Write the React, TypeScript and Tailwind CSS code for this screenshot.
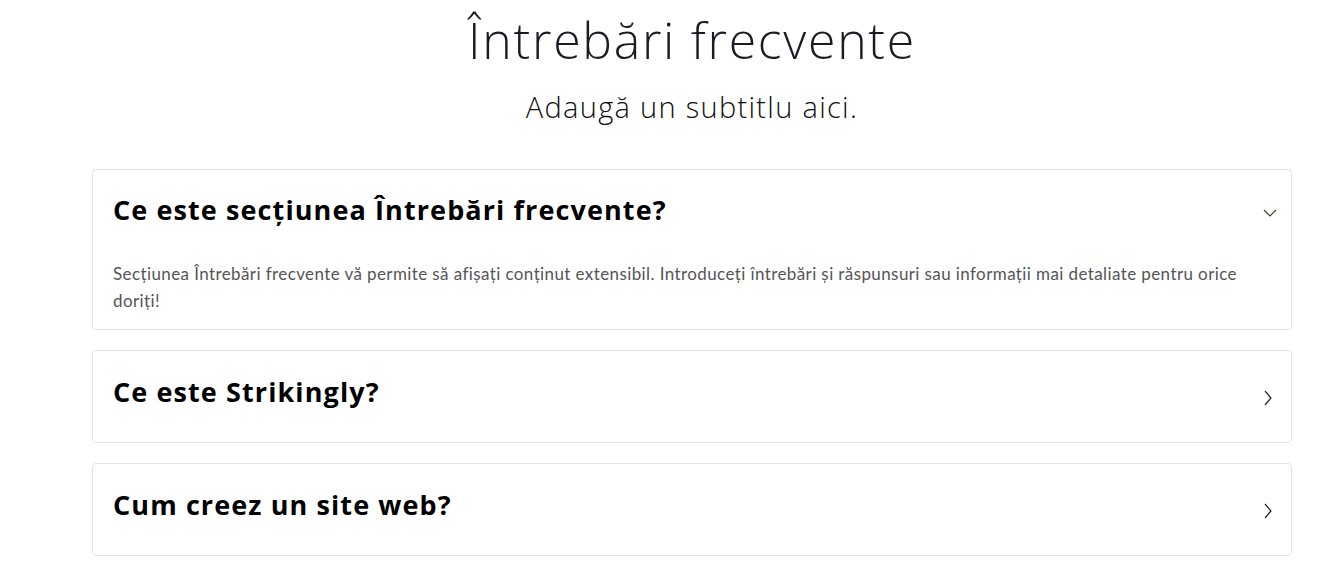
const faqs = [
  {
    q: 'Ce este secțiunea Întrebări frecvente?',
    a: 'Secțiunea Întrebări frecvente vă permite să afișați conținut extensibil. Introduceți întrebări și răspunsuri sau informații mai detaliate pentru orice doriți!',
    open: true,
  },
  { q: 'Ce este Strikingly?', a: '', open: false },
  { q: 'Cum creez un site web?', a: '', open: false },
];

function Chevron({ open }: { open: boolean }) {
  if (open) {
    return (
      <svg width="14" height="8" viewBox="0 0 14 8" className="mr-[14px] -mt-[4px]">
        <polyline points="1,1 7,7 13,1" fill="none" stroke="#4a3c2a" strokeWidth="1.2" />
      </svg>
    );
  }
  return (
    <svg width="8" height="16" viewBox="0 0 8 16" className="mr-[19px] mt-[2px]">
      <polyline points="1,1 7,8 1,15" fill="none" stroke="#222" strokeWidth="1.2" />
    </svg>
  );
}

export default function App() {
  return (
    <div className="min-h-screen bg-white font-['Open_Sans',sans-serif]">
      <div className="ml-[92px] w-[1200px]">
        <div className="text-center pt-[8px]">
          <h1 className="text-[50px] font-light leading-[64px] text-[#1b1b26] tracking-[1.7px]">Întrebări frecvente</h1>
          <p className="mt-[16px] text-[29px] font-light leading-[38px] text-[#111] tracking-[1.3px]">Adaugă un subtitlu aici.</p>
        </div>

        <div className="mt-[43px] flex flex-col gap-[20px]">
          {faqs.map((f) => (
            <div key={f.q} className="border border-[#e3e3e3] rounded-[4px] bg-white pl-[20px]">
              <div className={`flex items-center justify-between ${f.open ? 'h-[90px]' : 'h-[91px]'}`}>
                <h3 className="text-[27px] font-bold text-black leading-[36px] tracking-[1.1px] -mt-[10px]">{f.q}</h3>
                <Chevron open={f.open} />
              </div>
              {f.open && (
                <p className="pb-[15px] pr-[40px] text-[17px] leading-[27px] tracking-[0.4px] text-[#555] font-['Lato',sans-serif]">{f.a}</p>
              )}
            </div>
          ))}
        </div>
      </div>
    </div>
  );
}
